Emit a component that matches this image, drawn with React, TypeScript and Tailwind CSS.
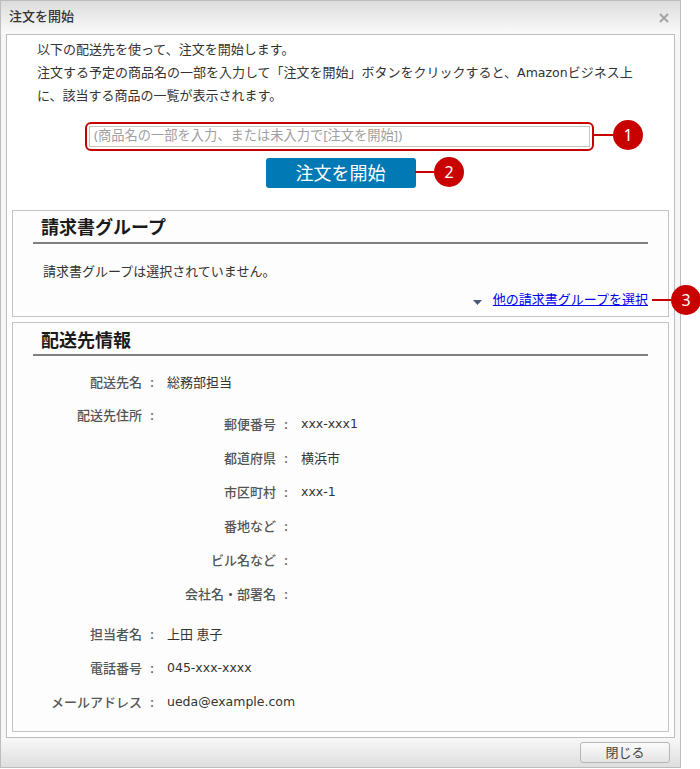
const FONT = "font-['Noto_Sans','Noto_Sans_CJK_JP',sans-serif]";
const LATIN = "font-['DejaVu_Sans',sans-serif] text-[12.5px]";

const ADDRESS: { label: string; value: string }[] = [
  { label: "郵便番号", value: "xxx-xxx1" },
  { label: "都道府県", value: "横浜市" },
  { label: "市区町村", value: "xxx-1" },
  { label: "番地など", value: "" },
  { label: "ビル名など", value: "" },
  { label: "会社名・部署名", value: "" },
];

const CONTACT: { label: string; value: string }[] = [
  { label: "担当者名", value: "上田 恵子" },
  { label: "電話番号", value: "045-xxx-xxxx" },
  { label: "メールアドレス", value: "ueda@example.com" },
];

function Callout({ n, line, className }: { n: number; line: number; className: string }) {
  return (
    <div className={`absolute flex items-center ${className}`}>
      <div className="h-[2px] bg-[#c80000]" style={{ width: line }} />
      <div className="flex h-[30px] w-[30px] items-center justify-center rounded-full bg-[#c80000] text-[16px] leading-none text-white">
        {n}
      </div>
    </div>
  );
}

function Row({ label, value, width }: { label: string; value?: string; width: number }) {
  const ascii = /^[\x21-\x7e]+$/.test(value ?? "");
  return (
    <div className="flex h-[34px] items-center text-[13px] leading-none">
      <div className="shrink-0 whitespace-nowrap text-right font-medium text-[#555]" style={{ width }}>
        {label}
      </div>
      <div className="w-[20px] shrink-0 text-center font-medium text-[#555]">:</div>
      <div className={`ml-[5px] whitespace-nowrap text-[#333] ${ascii ? LATIN : ""}`}>{value}</div>
    </div>
  );
}

export default function App() {
  return (
    <div className={`h-[769px] w-[700px] bg-white text-[#333] ${FONT}`}>
      <div className="relative flex h-[768px] w-[681px] flex-col border border-[#bdbdbd] bg-[#f6f6f6]">
        <div className="flex h-[33px] shrink-0 items-center justify-between bg-gradient-to-b from-[#dcdcdc] to-[#fafafa] pb-[2px] pl-[8px] pr-[11px]">
          <span className="text-[13px] font-medium text-[#333]">注文を開始</span>
          <svg width="10" height="10" viewBox="0 0 10 10" className="mt-[3px]">
            <path d="M1 1l8 8M9 1l-8 8" stroke="#a3a3a3" strokeWidth="2" />
          </svg>
        </div>

        <div className="mx-[5px] flex h-[704px] shrink-0 flex-col border border-[#bdbdbd] bg-white px-[5px]">
          <div className="h-[72px] pl-[25px] pt-[3px] text-[13px] leading-[22.5px] text-[#333]">
            <p>以下の配送先を使って、注文を開始します。</p>
            <p className="whitespace-nowrap">
              注文する予定の商品名の一部を入力して「注文を開始」ボタンをクリックすると、<span className={LATIN}>Amazon</span>ビジネス上
            </p>
            <p>に、該当する商品の一覧が表示されます。</p>
          </div>

          <div className="relative mt-[15px] flex flex-col items-center">
            <div className="-ml-[2px] flex h-[29px] w-[509px] items-center rounded-[6px] border-2 border-[#c80000] p-[2px]">
              <div className="flex h-full w-full items-center border border-[#c4c4c4] px-[4px] pb-[2px] text-[13.25px] text-[#a0a0a0]">
                (商品名の一部を入力、または未入力で[注文を開始])
              </div>
            </div>
            <button className="mt-[7px] h-[30px] w-[150px] rounded-[3px] bg-[#0079b5] text-[18px] leading-none text-white">
              注文を開始
            </button>
            <Callout n={1} line={20} className="left-[581px] top-[-2px]" />
            <Callout n={2} line={19} className="left-[403px] top-[35px]" />
          </div>

          <section className="relative mt-[22px] h-[107px] shrink-0 border border-[#c4c4c4] bg-[#fdfdfd] px-[20px]">
            <h2 className="flex h-[33px] items-center border-b-2 border-[#808080] pl-[8px] pt-[2px] text-[18px] font-bold text-[#1a1a1a]">
              請求書グループ
            </h2>
            <p className="pl-[10px] pt-[21px] text-[13px] leading-none text-[#333]">請求書グループは選択されていません。</p>
            <div className="mt-[15px] flex items-center justify-end text-[13px] leading-none">
              <svg width="9" height="5" viewBox="0 0 9 5" className="mr-[11px] mt-[5px]">
                <path d="M0 0h9L4.5 5z" fill="#4a5a78" />
              </svg>
              <a href="#" className="text-[#0000ee] underline">他の請求書グループを選択</a>
            </div>
            <Callout n={3} line={19} className="left-[639px] top-[74px]" />
          </section>

          <section className="mt-[5px] h-[410px] shrink-0 border border-[#c4c4c4] bg-[#fdfdfd] px-[20px]">
            <h2 className="flex h-[33px] items-center border-b-2 border-[#808080] pl-[8px] pt-[3px] text-[18px] font-bold text-[#1a1a1a]">
              配送先情報
            </h2>
            <div className="-ml-[20px] pt-[9px]">
              <Row label="配送先名" value="総務部担当" width={129} />
              <div className="flex">
                <div className="flex h-[32px] w-[149px] shrink-0 items-center text-[13px] leading-none">
                  <div className="w-[129px] text-right font-medium text-[#555]">配送先住所</div>
                  <div className="w-[20px] text-center font-medium text-[#555]">:</div>
                </div>
                <div className="pt-[8px]">
                  {ADDRESS.map((a) => (
                    <Row key={a.label} label={a.label} value={a.value} width={114} />
                  ))}
                </div>
              </div>
              <div className="mt-[6px]">
                {CONTACT.map((c) => (
                  <Row key={c.label} label={c.label} value={c.value} width={129} />
                ))}
              </div>
            </div>
          </section>
        </div>

        <div className="flex flex-1 items-start justify-end bg-gradient-to-b from-[#f8f8f8] to-[#dedede] pr-[10px] pt-[4px]">
          <button className="h-[21px] w-[90px] rounded-[3px] border border-[#b5b5b5] bg-gradient-to-b from-[#fbfbfb] to-[#e4e4e4] text-[13px] leading-none text-[#444]">
            閉じる
          </button>
        </div>
      </div>
    </div>
  );
}
